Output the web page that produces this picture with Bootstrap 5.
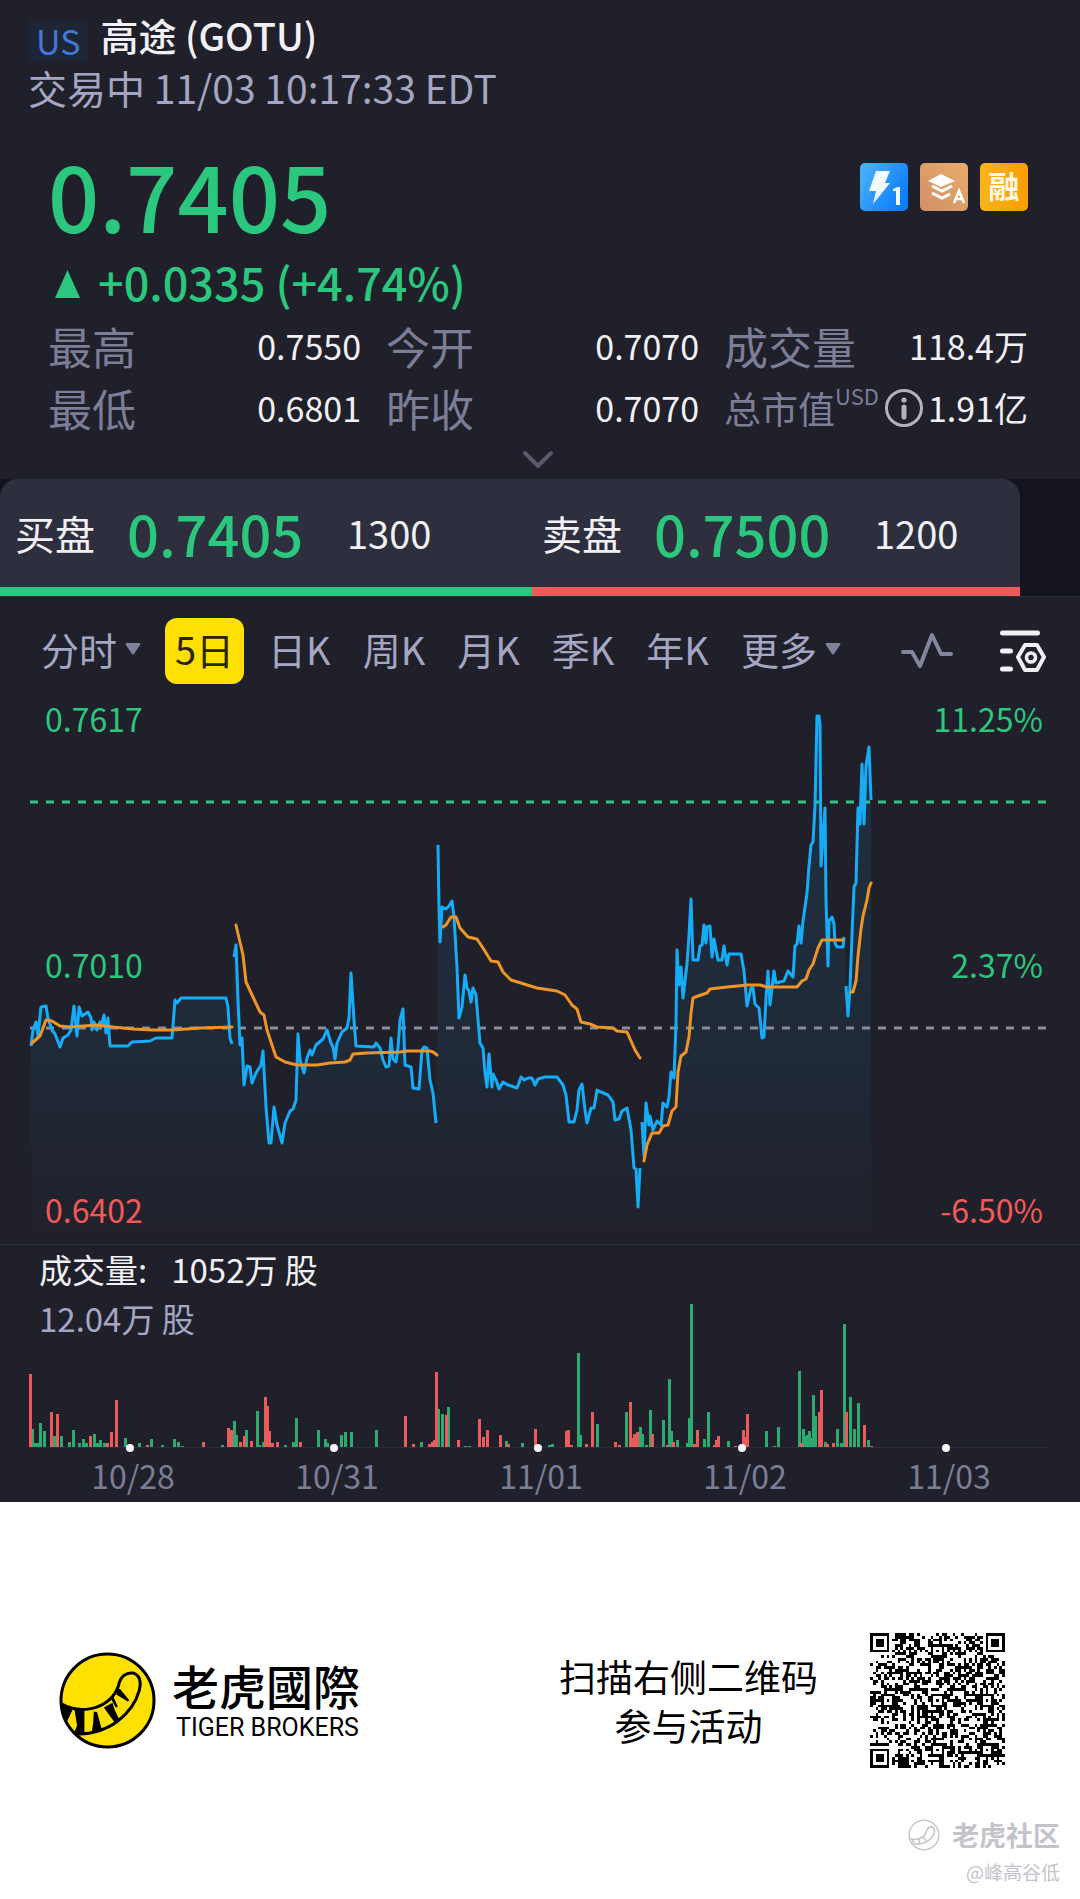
<!DOCTYPE html>
<html lang="zh-CN">
<head>
<meta charset="utf-8">
<meta name="viewport" content="width=device-width, initial-scale=1">
<title>高途 (GOTU)</title>
<link href="https://cdn.jsdelivr.net/npm/bootstrap@5.3.0/dist/css/bootstrap.min.css" rel="stylesheet">
<style>
  :root { --bg: #20202a; --up: #2bc77e; --down: #f15a59; --muted: #7c7d96; --soft: #a4a6c3; --lite: #f1f1f5; }
  body { font-family: "Noto Sans CJK SC", "Noto Sans", sans-serif; background: #fff; color: var(--lite); }
  button { font-family: inherit; }
  svg { display: block; flex: none; }
  .quote { background: var(--bg); }
  .up { color: var(--up); }
  .down { color: var(--down); }

  .head { padding: 12px 28px 0; }
  .title-line { height: 46px; }
  .market { background: #1e2536; color: #4577d8; font-size: 34px; line-height: 42px; padding: 0 8px; border-radius: 4px; margin: 8px 12px 0 0; height: 42px; }
  .stock { font-size: 38px; line-height: 46px; font-weight: 500; margin: 0; }
  .status { font-size: 39px; line-height: 58px; color: var(--soft); }

  .summary { padding: 23px 52px 0 48px; }
  .price { font-size: 90px; line-height: 110px; font-weight: 500; }
  .change { font-size: 45px; line-height: 66px; font-weight: 500; }
  .change svg { margin: 4px 18px 0 7px; }
  .tags { gap: 12px; }
  .stats { display: grid; grid-template-columns: 1.03fr 1.03fr 1fr; column-gap: 25px; margin: 0; }
  .stats > div { height: 62px; }
  .stats dt { font-weight: 400; font-size: 44px; line-height: 62px; color: var(--muted); }
  .stats dt.cap-label { font-size: 37px; }
  .stats dt.cap-label sup { font-size: 22px; line-height: 22px; top: -19px; vertical-align: baseline; }
  .stats dd { font-size: 34px; line-height: 62px; margin: 0; }
  .expand { height: 40px; }
  .bare { border: 0; background: none; padding: 0; color: inherit; }

  .depth { background: #13141d; padding-right: 60px; border-bottom: 1px solid #2a2b38; }
  .sides { background: #2d2e3e; border-radius: 18px 18px 0 0; overflow: hidden; }
  .side { height: 117px; border-bottom: 9px solid var(--up); padding: 0 0 1px 15px; white-space: nowrap; }
  .side.buy { flex: 530 1 0; }
  .side.sell { flex: 490 1 0; border-color: var(--down); padding-left: 10px; }
  .side .name { font-size: 40px; width: 108px; }
  .side .at { font-size: 56px; font-weight: 500; line-height: 60px; width: 224px; }
  .side .qty { font-size: 38px; }

  .periods { height: 107px; padding: 0 34px 0 25px; }
  .periods button { font-size: 38px; line-height: 62px; color: var(--soft); padding: 0 16px 4px; white-space: nowrap; }
  .periods button.tool { padding: 0; }
  .periods .active { background: #ffe000; color: #2a2310; border-radius: 12px; padding: 0 10px 4px; margin: 0 8px; }
  .tools { gap: 47px; }

  .plot { position: relative; border-bottom: 1px solid #2c2d3a; }
  .plot svg, .volume svg { width: 100%; height: auto; }
  .scale { position: absolute; inset: 3px 37px 24px 45px; font-size: 32px; line-height: 22px; }
  .volume { position: relative; }
  .volume-text { position: absolute; top: 0; left: 39px; font-size: 33px; line-height: 49px; }
  .volume-text .now { color: var(--soft); }
  .dates { display: grid; grid-template-columns: repeat(5, 1fr); padding: 0 29px 7px 31px; font-size: 32px; line-height: 40px; color: var(--muted); text-align: center; }

  .promo { color: #000; background: #fff; padding: 131px 75px 0 59px; }
  .brand-block { padding-bottom: 5px; margin-left: 16px; }
  .brand-cn { font-family: "Noto Sans CJK TC", "Noto Sans CJK SC", sans-serif; font-size: 47px; line-height: 59px; font-weight: 500; }
  .brand-en { font-family: Roboto, sans-serif; font-size: 25px; line-height: 28px; margin-left: 4px; }
  .scan { font-size: 37px; line-height: 49px; margin-right: 52px; }
  .credit { color: #c3c4c9; padding: 47px 20px 14px; }
  .credit .site { font-size: 27px; line-height: 40px; font-weight: 700; gap: 12px; }
  .credit .user { font-size: 19px; line-height: 34px; }
</style>
</head>
<body>
<main class="quote">
  <header class="head">
    <div class="title-line d-flex align-items-start">
      <span class="market">US</span>
      <h1 class="stock">高途 (GOTU)</h1>
    </div>
    <div class="status">交易中 11/03 10:17:33 EDT</div>
  </header>

  <section class="summary">
    <div class="d-flex justify-content-between align-items-start">
      <div class="price up">0.7405</div>
      <div class="tags d-flex mt-4">
        <svg width="48" height="48" viewBox="0 0 48 48" role="img" aria-label="Level 1">
          <defs><linearGradient id="gBlue" x1="0" y1="0" x2="1" y2=".6"><stop offset="0" stop-color="#4eb6fb"/><stop offset="1" stop-color="#0d7dfd"/></linearGradient></defs>
          <rect width="48" height="48" rx="5" fill="url(#gBlue)"/>
          <path d="M16 8h14l-5 12h5L13 41l3-13H9z" fill="#f2faff"/>
          <path d="M33 26l5-2h2v18h-4V28h-3z" fill="#f2faff"/>
        </svg>
        <svg width="48" height="48" viewBox="0 0 48 48" role="img" aria-label="A">
          <defs><linearGradient id="gTan" x1="1" y1="0" x2="0" y2="1"><stop offset="0" stop-color="#e9ac6a"/><stop offset="1" stop-color="#cf9069"/></linearGradient></defs>
          <rect width="48" height="48" rx="5" fill="url(#gTan)"/>
          <path d="M21 11l14 7-14 6-13-6z" fill="#fff"/>
          <path d="M12 23l10 5 10-5M12 30l10 5 8-4" fill="none" stroke="#fff" stroke-width="3"/>
          <path d="M34 40l5-12 5 12M36 36h6" fill="none" stroke="#fff" stroke-width="2.600"/>
        </svg>
        <svg width="48" height="48" viewBox="0 0 48 48">
          <defs><linearGradient id="gGold" x1="0" y1="0" x2="1" y2="0"><stop offset="0" stop-color="#f8b51a"/><stop offset="1" stop-color="#fc9d03"/></linearGradient></defs>
          <rect width="48" height="48" rx="5" fill="url(#gGold)"/>
          <text x="24" y="35" font-size="31" font-weight="700" text-anchor="middle" fill="#fffbe8">融</text>
        </svg>
      </div>
    </div>
    <div class="change up d-flex align-items-center">
      <svg width="25" height="28" viewBox="0 0 25 28"><path d="M12.500 0L25 28H0z" fill="currentColor"/></svg>
      <span>+0.0335 (+4.74%)</span>
    </div>
    <dl class="stats">
      <div class="d-flex justify-content-between"><dt>最高</dt><dd>0.7550</dd></div>
      <div class="d-flex justify-content-between"><dt>今开</dt><dd>0.7070</dd></div>
      <div class="d-flex justify-content-between"><dt>成交量</dt><dd>118.4万</dd></div>
      <div class="d-flex justify-content-between"><dt>最低</dt><dd>0.6801</dd></div>
      <div class="d-flex justify-content-between"><dt>昨收</dt><dd>0.7070</dd></div>
      <div class="d-flex justify-content-between"><dt class="cap-label">总市值<sup>USD</sup></dt>
        <dd class="d-flex align-items-center gap-1">
          <svg width="40" height="40" viewBox="0 0 40 40" fill="none" stroke="#b4b4bd"><circle cx="20" cy="20" r="17.500" stroke-width="3"/><path d="M20 19v10" stroke-width="5" stroke-linecap="round"/><circle cx="20" cy="12" r="2.600" fill="#b4b4bd" stroke="none"/></svg>
          <span>1.91亿</span></dd></div>
    </dl>
    <div class="expand d-flex justify-content-center align-items-center">
      <button class="bare" type="button" aria-label="展开"><svg width="32" height="20" viewBox="0 0 32 20"><path d="M3 4l13 13L29 4" fill="none" stroke="#5a5a6c" stroke-width="4" stroke-linecap="round"/></svg></button>
    </div>
  </section>

  <section class="depth">
    <div class="sides d-flex">
      <div class="side buy d-flex align-items-center"><span class="name">买盘</span><span class="at up ps-1">0.7405</span><span class="qty">1300</span></div>
      <div class="side sell d-flex align-items-center"><span class="name">卖盘</span><span class="at up ps-1">0.7500</span><span class="qty">1200</span></div>
    </div>
  </section>

  <nav class="periods d-flex align-items-center">
    <button class="bare d-flex align-items-center gap-2" type="button">分时 <svg width="16" height="12" viewBox="0 0 16 12"><path d="M1 0h14q1 1 0 2L9 11q-1 1-2 0L1 2Q0 1 1 0z" fill="#7f8099"/></svg></button>
    <button class="bare active" type="button">5日</button>
    <button class="bare" type="button">日K</button>
    <button class="bare" type="button">周K</button>
    <button class="bare" type="button">月K</button>
    <button class="bare" type="button">季K</button>
    <button class="bare" type="button">年K</button>
    <button class="bare d-flex align-items-center gap-2" type="button">更多 <svg width="16" height="12" viewBox="0 0 16 12"><path d="M1 0h14q1 1 0 2L9 11q-1 1-2 0L1 2Q0 1 1 0z" fill="#7f8099"/></svg></button>
    <div class="tools d-flex align-items-center ms-auto">
      <button class="bare tool" type="button" aria-label="指标"><svg width="52" height="40" viewBox="0 0 52 40"><path d="M2 21h9l8 14L31 4l9 19h10" fill="none" stroke="#85869e" stroke-width="4" stroke-linecap="round" stroke-linejoin="round"/></svg></button>
      <button class="bare tool" type="button" aria-label="设置"><svg width="46" height="44" viewBox="0 0 46 44" fill="none" stroke="#f1f1f5" stroke-width="5" stroke-linecap="round" stroke-linejoin="round"><path d="M2.500 4h35M2.500 22h8M2.500 40h8"/><path d="M25 16h12l7 12-7 13H25l-7-13z" stroke-width="4"/><circle cx="31" cy="28.500" r="4.500" stroke-width="3.600"/></svg></button>
    </div>
  </nav>

  <section class="plot">
    <svg viewBox="0 704 1080 540" role="img" aria-label="5日走势">
      <defs><linearGradient id="gArea" gradientUnits="userSpaceOnUse" x1="0" y1="715" x2="0" y2="1244"><stop offset="0" stop-color="#18a5e8" stop-opacity=".13"/><stop offset=".65" stop-color="#18a5e8" stop-opacity=".07"/><stop offset="1" stop-color="#18a5e8" stop-opacity="0"/></linearGradient></defs>
      <path id="area" fill="url(#gArea)"/>
      <path d="M30 802H1046" stroke="#34c183" stroke-width="3" stroke-dasharray="8 8"/>
      <path d="M30 1028H1046" stroke="#8b8b99" stroke-width="3" stroke-dasharray="8 8"/>
      <path id="line" fill="none" stroke="#16adf8" stroke-width="3" stroke-linejoin="round"/>
      <path id="average" fill="none" stroke="#ef9426" stroke-width="3" stroke-linejoin="round" stroke-linecap="round"/>
    </svg>
    <div class="scale d-flex flex-column justify-content-between">
      <div class="d-flex justify-content-between up"><span>0.7617</span><span>11.25%</span></div>
      <div class="d-flex justify-content-between up"><span>0.7010</span><span>2.37%</span></div>
      <div class="d-flex justify-content-between down"><span>0.6402</span><span>-6.50%</span></div>
    </div>
  </section>

  <section class="volume">
    <svg viewBox="0 1245 1080 210" role="img" aria-label="成交量">
      <path d="M30 1447.500H1048" stroke="#2c2d3a"/>
      <path id="barsUp" stroke="#2daa70" stroke-width="3"/>
      <path id="barsDown" stroke="#ea5b5c" stroke-width="3"/>
      <g fill="#f6f6f8"><circle cx="130" cy="1448" r="4"/><circle cx="334" cy="1448" r="4"/><circle cx="538" cy="1448" r="4"/><circle cx="742" cy="1448" r="4"/><circle cx="946" cy="1448" r="4"/></g>
    </svg>
    <div class="volume-text"><div>成交量:<span class="ms-4">1052万 股</span></div><div class="now">12.04万 股</div></div>
  </section>
  <div class="dates"><span>10/28</span><span>10/31</span><span>11/01</span><span>11/02</span><span>11/03</span></div>
</main>

<footer class="promo">
  <div class="d-flex align-items-center">
    <svg width="97" height="97" viewBox="58 96 290 290" role="img" aria-label="Tiger Brokers">
      <circle cx="203" cy="241" r="139" fill="#ffe100" stroke="#000" stroke-width="9"/>
      <path d="M66 252C95 268 125 270 150 266C198 258 226 228 236 196C242 166 262 156 280 159C302 166 303 190 298 211C288 248 264 280 232 304C200 328 150 345 104 340" fill="none" stroke="#000" stroke-width="9"/>
      <path d="M64 250l26 12 8 8-16 34-8-6-10-30zM104 266h30v76l-30-6 8-20zM162 274l10 2 14 52-30 8 4-26zM192 262l26-14 6 20 14 30-12 10-18-24zM230 210l10-4 28 34-4 4-34-20zM212 234l8-6 14 32-6 2z" fill="#000"/>
    </svg>
    <div class="brand-block">
      <div class="brand-cn">老虎國際</div>
      <div class="brand-en">TIGER BROKERS</div>
    </div>
    <div class="scan ms-auto text-center">扫描右侧二维码<br>参与活动</div>
    <svg width="135" height="135" viewBox="0 0 49 49" shape-rendering="crispEdges" role="img" aria-label="二维码"><path id="qr" fill="#000"/></svg>
  </div>
</footer>
<div class="credit bg-white d-flex flex-column align-items-end">
  <div class="site d-flex align-items-center">
    <svg width="32" height="32" viewBox="58 96 290 290"><circle cx="203" cy="241" r="134" fill="none" stroke="#c8c9ce" stroke-width="14"/><path d="M80 270C95 285 185 290 220 225C230 160 300 140 298 211C288 278 200 340 110 320L100 280M160 280v40M200 262l20 30" fill="none" stroke="#c8c9ce" stroke-width="16"/></svg>
    <span>老虎社区</span>
  </div>
  <div class="user">@峰高谷低</div>
</div>

<script src="https://cdn.jsdelivr.net/npm/bootstrap@5.3.0/dist/js/bootstrap.bundle.min.js"></script>
<script>
  // one string per trading day, "x,y" points
  const price = [
    "31,1046 33,1030 36,1022 38,1036 41,1007 46,1006 48,1018 52,1030 55,1034 60,1047 63,1038 68,1035 71,1030 74,1006 77,1036 79,1007 82,1016 88,1012 91,1018 92,1030 94,1022 97,1030 100,1022 101,1027 104,1015 106,1033 108,1018 110,1046 128,1046 132,1042 150,1041 156,1038 172,1038 175,1000 177,1003 181,998 226,998 228,1007 230,1038 232,1044",
    "234,957 236,945 238,1000 240,1045 242,1038 244,1085 247,1066 250,1067 252,1083 256,1073 261,1065 263,1051 266,1107 269,1143 271,1143 274,1107 277,1125 282,1143 285,1123 290,1111 293,1109 296,1100 298,1034 300,1060 304,1073 307,1058 310,1050 312,1055 316,1045 323,1039 327,1030 331,1043 333,1047 335,1059 337,1043 342,1032 347,1028 349,1018 351,973 354,1020 356,1046 374,1047 376,1043 380,1048 383,1060 386,1067 389,1066 391,1038 393,1059 396,1062 398,1048 400,1020 403,1009 405,1065 411,1067 413,1088 419,1089 422,1050 424,1047 427,1048 430,1080 433,1093 436,1123",
    "438,845 439,907 440,942 442,907 446,909 449,906 452,901 454,917 457,967 459,1018 462,1007 465,975 467,988 469,991 471,1002 473,988 476,995 478,1020 480,1043 483,1048 485,1073 487,1087 489,1054 492,1087 493,1074 496,1080 499,1089 503,1082 508,1085 517,1088 519,1083 521,1077 524,1080 528,1078 532,1078 535,1085 538,1079 545,1077 557,1077 563,1085 566,1095 569,1122 574,1122 577,1110 579,1090 582,1084 585,1110 587,1123 591,1108 594,1108 597,1090 601,1092 608,1095 613,1102 615,1120 619,1119 622,1111 627,1108 631,1130 634,1168 636,1169 638,1207 640,1168",
    "642,1122 644,1156 646,1103 649,1125 650,1116 653,1130 657,1121 661,1125 663,1103 667,1107 669,1097 671,1072 674,1078 676,1024 677,950 679,985 681,967 683,998 687,964 689,935 691,899 693,960 698,960 700,946 702,945 704,925 706,943 707,927 710,926 712,957 714,939 718,960 722,960 724,946 727,965 729,954 741,954 744,971 747,1006 751,988 753,988 755,1004 759,1008 762,1038 764,1037 766,998 768,971 770,1005 774,971 776,983 784,981 788,971 793,977 795,946 797,944 799,926 801,943 803,921 807,893 809,866 811,845 813,842 815,806 817,716 819,716 820,725 821,866 823,837 825,808 826,900 828,966 829,921 832,917 834,924 835,943 837,947 843,947 844,937",
    "846,986 848,1016 850,988 852,935 854,887 856,883 858,808 860,824 862,764 864,824 866,766 869,747 871,800"
  ];
  const average = [
    "32,1043 40,1036 46,1020 52,1021 60,1026 70,1027 97,1025 113,1027 133,1029 153,1030 173,1030 200,1028 232,1027",
    "236,925 239,938 243,955 246,982 253,997 260,1012 264,1015 267,1030 276,1057 285,1062 297,1065 317,1065 330,1063 345,1062 350,1060 353,1054 367,1053 400,1052 407,1051 430,1051 433,1052 437,1055",
    "443,927 446,925 451,917 456,917 460,928 468,937 477,939 483,948 491,961 498,962 503,972 511,980 537,988 557,991 565,995 572,1005 577,1009 581,1022 590,1024 597,1027 613,1028 617,1031 627,1032 635,1050 640,1058",
    "644,1161 647,1145 652,1133 659,1133 663,1126 668,1125 672,1111 676,1107 678,1072 681,1056 686,1052 689,1037 691,1013 693,998 698,996 707,993 710,989 727,987 748,985 760,985 767,987 797,987 802,981 806,979 809,970 813,964 818,948 822,940 843,940",
    "851,992 853,992 856,981 858,956 861,929 863,916 866,904 867,900 869,888 871,883"
  ];
  // volume bars, "x,height"
  const barsUp = "32,18 35,4 37,4 40,24 44,16 54,11 61,11 69,5 73,17 79,4 83,8 86,4 94,13 97,4 100,7 104,4 125,9 139,4 151,8 162,2 174,8 178,5 182,1 222,2 234,26 236,12 246,17 257,36 259,2 263,5 285,2 293,5 296,29 318,17 325,8 327,4 341,12 345,15 351,15 376,17 421,5 438,38 442,33 448,40 465,1 469,1 506,6 522,4 549,2 552,3 578,94 580,12 597,23 626,35 640,20 642,13 646,2 650,37 663,27 669,68 671,16 677,7 687,4 689,29 691,143 704,8 708,35 728,6 766,16 774,1 778,20 799,76 803,18 805,11 807,12 809,16 811,9 813,52 815,31 825,5 837,18 841,4 844,123 850,50 854,18 858,44 868,7";
  const barsDown = "30,73 51,35 57,33 90,11 107,4 111,15 116,47 147,2 203,5 228,19 231,17 240,5 244,11 251,6 265,50 267,41 269,16 272,4 277,5 300,5 405,31 413,3 429,3 432,5 434,7 436,75 446,32 458,7 479,28 483,10 487,17 500,12 508,3 535,18 566,16 568,17 571,2 586,3 592,35 615,5 619,2 630,45 632,9 634,13 637,15 652,13 667,2 673,5 694,3 697,17 714,2 716,7 718,11 735,1 743,17 745,10 747,33 801,4 819,35 821,57 827,3 833,4 846,35 864,22 871,1";

  const put = (id, d) => document.getElementById(id).setAttribute("d", d);
  put("line", price.map(p => "M" + p).join(""));
  put("average", average.map(p => "M" + p).join(""));
  put("area", "M31,1244L" + price.join(" ") + "L871,1244Z");
  const bars = s => s.split(" ").map(b => { const [x, h] = b.split(","); return "M" + (+x + .5) + " 1447v-" + h; }).join("");
  put("barsUp", bars(barsUp));
  put("barsDown", bars(barsDown));

  // 49 x 49 code: finder, timing and alignment patterns over the data modules
  const n = 49, grid = [];
  let seed = 20221103;
  const next = () => (seed = (seed * 1103515245 + 12345) % 2147483648) / 2147483648;
  for (let y = 0; y < n; y++) { grid.push([]); for (let x = 0; x < n; x++) grid[y].push(next() < .5); }
  const ring = (cx, cy, r, dark) => {
    for (let y = -r; y <= r; y++) for (let x = -r; x <= r; x++)
      if (grid[cy + y] && cx + x >= 0 && cx + x < n) grid[cy + y][cx + x] = dark(Math.max(Math.abs(x), Math.abs(y)));
  };
  for (let i = 0; i < n; i++) { grid[6][i] = grid[i][6] = i % 2 === 0; }
  [[24, 6], [6, 24], [24, 24], [42, 24], [24, 42], [42, 42]].forEach(c => ring(c[0], c[1], 2, k => k !== 1));
  [[3, 3], [45, 3], [3, 45]].forEach(c => ring(c[0], c[1], 4, k => k < 2 || k === 3));
  let d = "";
  grid.forEach((row, y) => row.forEach((on, x) => { if (on) d += "M" + x + " " + y + "h1v1h-1z"; }));
  put("qr", d);
</script>
</body>
</html>
